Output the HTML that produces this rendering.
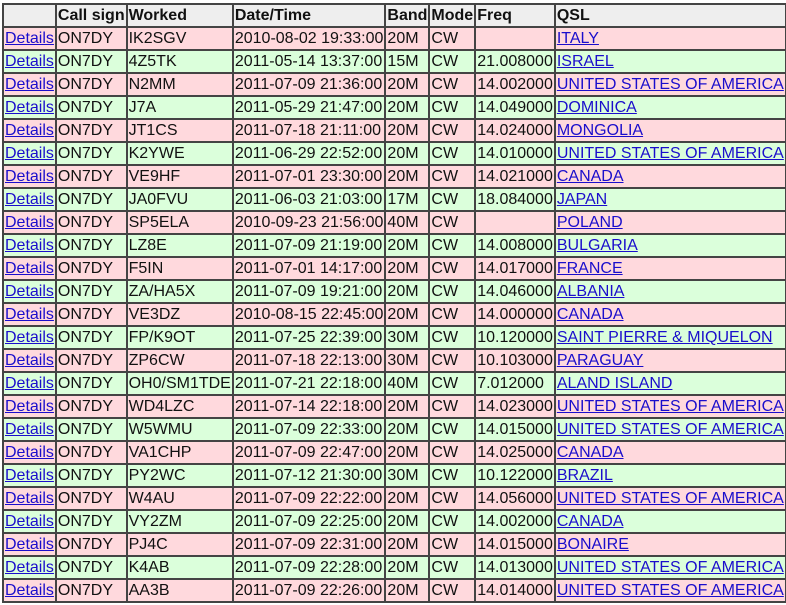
<!DOCTYPE html><html><head><style>
body{margin:0;background:#fff;overflow:hidden;width:786px;height:605px}
table{position:absolute;left:2px;top:3px;border-collapse:collapse;table-layout:fixed;font-family:"Liberation Sans",Arial,sans-serif;font-size:16px;border:2px solid #555}
td,th{border:2px solid #444;padding:0 1px;height:21px;line-height:21px;white-space:nowrap;overflow:hidden;text-align:left;color:#111}
th{background:#eee;font-weight:bold}
tr.p td{background:#ffd9dd}
tr.g td{background:#dbffdb}
a{color:#1a0dcc;text-decoration:underline}
</style></head><body>
<table>
<colgroup><col style="width:53px"><col style="width:69px"><col style="width:105px"><col style="width:152px"><col style="width:45px"><col style="width:46px"><col style="width:81px"><col style="width:228px"></colgroup>
<tr><th></th><th>Call sign</th><th>Worked</th><th>Date/Time</th><th>Band</th><th>Mode</th><th>Freq</th><th>QSL</th></tr>
<tr class="p"><td><a>Details</a></td><td>ON7DY</td><td>IK2SGV</td><td>2010-08-02 19:33:00</td><td>20M</td><td>CW</td><td></td><td><a>ITALY</a></td></tr>
<tr class="g"><td><a>Details</a></td><td>ON7DY</td><td>4Z5TK</td><td>2011-05-14 13:37:00</td><td>15M</td><td>CW</td><td>21.008000</td><td><a>ISRAEL</a></td></tr>
<tr class="p"><td><a>Details</a></td><td>ON7DY</td><td>N2MM</td><td>2011-07-09 21:36:00</td><td>20M</td><td>CW</td><td>14.002000</td><td><a>UNITED STATES OF AMERICA</a></td></tr>
<tr class="g"><td><a>Details</a></td><td>ON7DY</td><td>J7A</td><td>2011-05-29 21:47:00</td><td>20M</td><td>CW</td><td>14.049000</td><td><a>DOMINICA</a></td></tr>
<tr class="p"><td><a>Details</a></td><td>ON7DY</td><td>JT1CS</td><td>2011-07-18 21:11:00</td><td>20M</td><td>CW</td><td>14.024000</td><td><a>MONGOLIA</a></td></tr>
<tr class="g"><td><a>Details</a></td><td>ON7DY</td><td>K2YWE</td><td>2011-06-29 22:52:00</td><td>20M</td><td>CW</td><td>14.010000</td><td><a>UNITED STATES OF AMERICA</a></td></tr>
<tr class="p"><td><a>Details</a></td><td>ON7DY</td><td>VE9HF</td><td>2011-07-01 23:30:00</td><td>20M</td><td>CW</td><td>14.021000</td><td><a>CANADA</a></td></tr>
<tr class="g"><td><a>Details</a></td><td>ON7DY</td><td>JA0FVU</td><td>2011-06-03 21:03:00</td><td>17M</td><td>CW</td><td>18.084000</td><td><a>JAPAN</a></td></tr>
<tr class="p"><td><a>Details</a></td><td>ON7DY</td><td>SP5ELA</td><td>2010-09-23 21:56:00</td><td>40M</td><td>CW</td><td></td><td><a>POLAND</a></td></tr>
<tr class="g"><td><a>Details</a></td><td>ON7DY</td><td>LZ8E</td><td>2011-07-09 21:19:00</td><td>20M</td><td>CW</td><td>14.008000</td><td><a>BULGARIA</a></td></tr>
<tr class="p"><td><a>Details</a></td><td>ON7DY</td><td>F5IN</td><td>2011-07-01 14:17:00</td><td>20M</td><td>CW</td><td>14.017000</td><td><a>FRANCE</a></td></tr>
<tr class="g"><td><a>Details</a></td><td>ON7DY</td><td>ZA/HA5X</td><td>2011-07-09 19:21:00</td><td>20M</td><td>CW</td><td>14.046000</td><td><a>ALBANIA</a></td></tr>
<tr class="p"><td><a>Details</a></td><td>ON7DY</td><td>VE3DZ</td><td>2010-08-15 22:45:00</td><td>20M</td><td>CW</td><td>14.000000</td><td><a>CANADA</a></td></tr>
<tr class="g"><td><a>Details</a></td><td>ON7DY</td><td>FP/K9OT</td><td>2011-07-25 22:39:00</td><td>30M</td><td>CW</td><td>10.120000</td><td><a>SAINT PIERRE &amp; MIQUELON</a></td></tr>
<tr class="p"><td><a>Details</a></td><td>ON7DY</td><td>ZP6CW</td><td>2011-07-18 22:13:00</td><td>30M</td><td>CW</td><td>10.103000</td><td><a>PARAGUAY</a></td></tr>
<tr class="g"><td><a>Details</a></td><td>ON7DY</td><td>OH0/SM1TDE</td><td>2011-07-21 22:18:00</td><td>40M</td><td>CW</td><td>7.012000</td><td><a>ALAND ISLAND</a></td></tr>
<tr class="p"><td><a>Details</a></td><td>ON7DY</td><td>WD4LZC</td><td>2011-07-14 22:18:00</td><td>20M</td><td>CW</td><td>14.023000</td><td><a>UNITED STATES OF AMERICA</a></td></tr>
<tr class="g"><td><a>Details</a></td><td>ON7DY</td><td>W5WMU</td><td>2011-07-09 22:33:00</td><td>20M</td><td>CW</td><td>14.015000</td><td><a>UNITED STATES OF AMERICA</a></td></tr>
<tr class="p"><td><a>Details</a></td><td>ON7DY</td><td>VA1CHP</td><td>2011-07-09 22:47:00</td><td>20M</td><td>CW</td><td>14.025000</td><td><a>CANADA</a></td></tr>
<tr class="g"><td><a>Details</a></td><td>ON7DY</td><td>PY2WC</td><td>2011-07-12 21:30:00</td><td>30M</td><td>CW</td><td>10.122000</td><td><a>BRAZIL</a></td></tr>
<tr class="p"><td><a>Details</a></td><td>ON7DY</td><td>W4AU</td><td>2011-07-09 22:22:00</td><td>20M</td><td>CW</td><td>14.056000</td><td><a>UNITED STATES OF AMERICA</a></td></tr>
<tr class="g"><td><a>Details</a></td><td>ON7DY</td><td>VY2ZM</td><td>2011-07-09 22:25:00</td><td>20M</td><td>CW</td><td>14.002000</td><td><a>CANADA</a></td></tr>
<tr class="p"><td><a>Details</a></td><td>ON7DY</td><td>PJ4C</td><td>2011-07-09 22:31:00</td><td>20M</td><td>CW</td><td>14.015000</td><td><a>BONAIRE</a></td></tr>
<tr class="g"><td><a>Details</a></td><td>ON7DY</td><td>K4AB</td><td>2011-07-09 22:28:00</td><td>20M</td><td>CW</td><td>14.013000</td><td><a>UNITED STATES OF AMERICA</a></td></tr>
<tr class="p"><td><a>Details</a></td><td>ON7DY</td><td>AA3B</td><td>2011-07-09 22:26:00</td><td>20M</td><td>CW</td><td>14.014000</td><td><a>UNITED STATES OF AMERICA</a></td></tr>
</table>
</body></html>
